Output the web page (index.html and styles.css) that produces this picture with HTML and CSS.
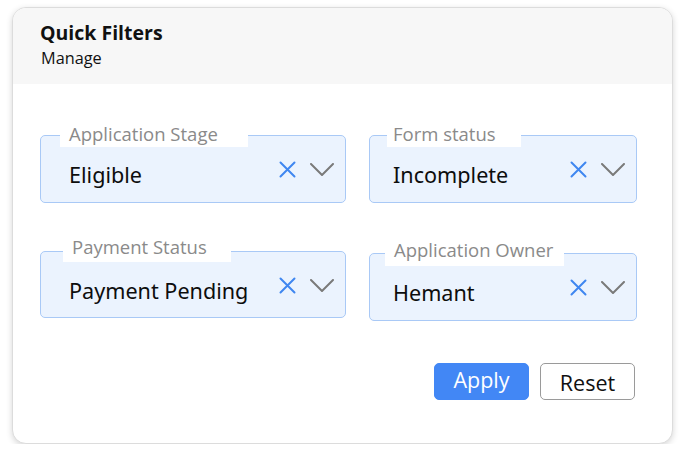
FILE: index.html
```html
<!DOCTYPE html>
<html>
<head>
<meta charset="utf-8">
<link rel="stylesheet" href="styles.css">
</head>
<body>
<div class="card">
  <div class="card-head">
    <div class="title">Quick Filters</div>
    <div class="subtitle">Manage</div>
  </div>
  <div class="card-body">
    <div class="grid">
      <div class="field f1">
        <span class="label">Application Stage</span>
        <span class="value">Eligible</span>
        <span class="icons">
          <svg class="ico-x" width="17" height="17" viewBox="0 0 17 17"><path d="M1.5 1.5L15.5 15.5M15.5 1.5L1.5 15.5" stroke="#3f86f0" stroke-width="2" fill="none" stroke-linecap="round"/></svg>
          <svg class="ico-chev" width="24" height="13" viewBox="0 0 24 13"><path d="M1 1L12 12L23 1" stroke="#7a7a7a" stroke-width="2" fill="none" stroke-linecap="round" stroke-linejoin="round"/></svg>
        </span>
      </div>
      <div class="field f2">
        <span class="label">Form status</span>
        <span class="value">Incomplete</span>
        <span class="icons">
          <svg class="ico-x" width="17" height="17" viewBox="0 0 17 17"><path d="M1.5 1.5L15.5 15.5M15.5 1.5L1.5 15.5" stroke="#3f86f0" stroke-width="2" fill="none" stroke-linecap="round"/></svg>
          <svg class="ico-chev" width="24" height="13" viewBox="0 0 24 13"><path d="M1 1L12 12L23 1" stroke="#7a7a7a" stroke-width="2" fill="none" stroke-linecap="round" stroke-linejoin="round"/></svg>
        </span>
      </div>
      <div class="field f3">
        <span class="label">Payment Status</span>
        <span class="value">Payment Pending</span>
        <span class="icons">
          <svg class="ico-x" width="17" height="17" viewBox="0 0 17 17"><path d="M1.5 1.5L15.5 15.5M15.5 1.5L1.5 15.5" stroke="#3f86f0" stroke-width="2" fill="none" stroke-linecap="round"/></svg>
          <svg class="ico-chev" width="24" height="13" viewBox="0 0 24 13"><path d="M1 1L12 12L23 1" stroke="#7a7a7a" stroke-width="2" fill="none" stroke-linecap="round" stroke-linejoin="round"/></svg>
        </span>
      </div>
      <div class="field f4">
        <span class="label">Application Owner</span>
        <span class="value">Hemant</span>
        <span class="icons">
          <svg class="ico-x" width="17" height="17" viewBox="0 0 17 17"><path d="M1.5 1.5L15.5 15.5M15.5 1.5L1.5 15.5" stroke="#3f86f0" stroke-width="2" fill="none" stroke-linecap="round"/></svg>
          <svg class="ico-chev" width="24" height="13" viewBox="0 0 24 13"><path d="M1 1L12 12L23 1" stroke="#7a7a7a" stroke-width="2" fill="none" stroke-linecap="round" stroke-linejoin="round"/></svg>
        </span>
      </div>
    </div>
    <div class="actions">
      <button class="btn btn-primary">Apply</button>
      <button class="btn btn-outline">Reset</button>
    </div>
  </div>
</div>
</body>
</html>
```
FILE: styles.css
```css
* { box-sizing: border-box; }
html, body { margin: 0; padding: 0; background: #ffffff; }
body {
  font-family: "Open Sans", "Noto Sans", sans-serif;
  color: #111;
  padding: 7px 0 0 12px;
}
.card {
  width: 661px;
  height: 437px;
  border: 1px solid #dcdcdc;
  border-radius: 14px;
  background: #fff;
  box-shadow: 0 2px 6px rgba(0,0,0,0.16);
  overflow: hidden;
}
.card-head {
  background: #f7f7f7;
  height: 76px;
  padding: 12px 0 0 27px;
}
.title {
  font-weight: 700;
  font-size: 19.5px;
  line-height: 26px;
  color: #111;
}
.subtitle {
  font-size: 16.3px;
  line-height: 22px;
  margin-top: 1px;
  margin-left: 1px;
  color: #111;
}
.card-body {
  padding: 51px 0 0 27px;
}
.grid {
  display: grid;
  grid-template-columns: 306px 268px;
  column-gap: 23px;
  row-gap: 48px;
  align-items: start;
}
.field {
  position: relative;
  height: 68px;
  border: 1px solid #a9c9f6;
  border-radius: 5px;
  background: #ebf3fe;
  display: flex;
  align-items: flex-start;
  padding: 0 11px 0 28px;
}
.f3 { height: 67px; }
.f4 { margin-top: 2px; }
.f2, .f4 { padding-left: 23px; }
.label {
  position: absolute;
  top: -15px;
  height: 26px;
  background: #fff;
  font-size: 18.5px;
  line-height: 25px;
  color: #8a8a8a;
  white-space: nowrap;
}
.f1 .label { left: 19px; width: 188px; padding-left: 9px; }
.f2 .label { left: 17px; width: 134px; padding-left: 6px; }
.f3 .label { left: 22px; width: 168px; padding-left: 9px; top: -18px; height: 28px; }
.f4 .label { left: 15px; width: 179px; padding-left: 9px; top: -17px; height: 29px; }
.value {
  flex: 1;
  font-family: "Noto Sans", "Open Sans", sans-serif;
  font-size: 21.6px;
  font-weight: 400;
  line-height: 28px;
  margin-top: 25px;
  color: #0d0d0d;
  white-space: nowrap;
}
.icons {
  display: flex;
  align-items: center;
  gap: 14px;
  margin-top: 25px;
}
.ico-x, .ico-chev { display: block; }
.actions {
  display: flex;
  justify-content: flex-end;
  gap: 11px;
  margin-top: 42px;
  padding-right: 37px;
}
.btn {
  width: 95px;
  height: 37px;
  font-family: "Open Sans", "Noto Sans", sans-serif;
  font-size: 21.5px;
  line-height: 28px;
  border-radius: 5px;
  padding: 0;
  cursor: pointer;
}
.btn-primary {
  background: #4287f5;
  color: #fff;
  border: 1px solid #4287f5;
  padding-bottom: 4px;
}
.btn-outline {
  background: #fff;
  color: #111;
  border: 1px solid #9a9a9a;
  padding-top: 2px;
}
```
